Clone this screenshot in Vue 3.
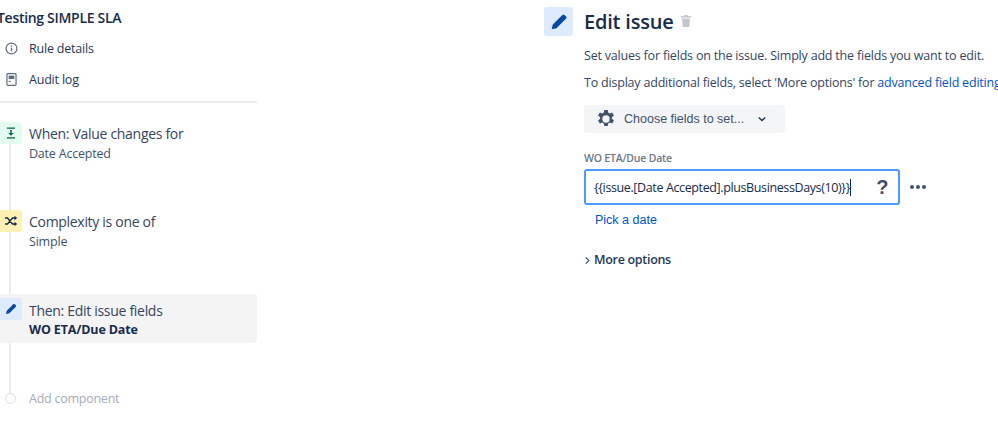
<script setup>
const steps = [
  { title: 'When: Value changes for', sub: 'Date Accepted', kind: 'when' },
  { title: 'Complexity is one of', sub: 'Simple', kind: 'cond' },
  { title: 'Then: Edit issue fields', sub: 'WO ETA/Due Date', kind: 'then' },
]
const expression = '{' + '{issue.[Date Accepted].plusBusinessDays(10)}' + '}'
</script>

<template>
  <div class="page">
    <aside class="side">
      <h2 class="rule-title">Testing SIMPLE SLA</h2>
      <div class="nav-row">
        <svg class="nav-icon" viewBox="0 0 12 12" width="13" height="13">
          <circle cx="6" cy="6" r="5" fill="none" stroke="#5e6c84" stroke-width="1.1" />
          <rect x="5.4" y="5.2" width="1.2" height="3.4" fill="#5e6c84" />
          <rect x="5.4" y="3.1" width="1.2" height="1.2" fill="#5e6c84" />
        </svg>
        <span>Rule details</span>
      </div>
      <div class="nav-row">
        <svg class="nav-icon" viewBox="0 0 12 12" width="13" height="13">
          <rect x="1.8" y=".6" width="8.400" height="10.800" rx=".8" fill="none" stroke="#5e6c84" stroke-width="1.1" />
          <rect x="3.4" y="2.400" width="5.200" height="3.200" fill="#5e6c84" />
          <rect x="3.4" y="7.200" width="2" height="1" fill="#5e6c84" />
        </svg>
        <span>Audit log</span>
      </div>
      <hr class="divider" />
      <div class="flow">
        <div class="rail"></div>
        <div v-for="s in steps" :key="s.kind" class="step" :class="s.kind">
          <div class="badge">
            <svg v-if="s.kind === 'when'" viewBox="0 0 14 14" width="14" height="14">
              <path d="M3 1.500h8v1.300H3zM3 11.200h8v1.300H3zM6.300 4h1.400v3h2L7 9.800 4.300 7h2z" fill="#006644" />
            </svg>
            <svg v-else-if="s.kind === 'cond'" viewBox="0 0 14 14" width="14" height="14">
              <path d="M1 4h2.500l5 6H11M1 10h2.500l5-6H11" fill="none" stroke="#172b4d" stroke-width="1.400" />
              <path d="M10.500 1.800 13.200 4l-2.700 2.200zM10.500 7.800 13.200 10l-2.700 2.200z" fill="#172b4d" />
            </svg>
            <svg v-else viewBox="0 0 14 14" width="14" height="14">
              <path d="M9.300 2.200a1 1 0 0 1 1.400 0l1.100 1.100a1 1 0 0 1 0 1.400L5.300 11.200 2 12l.8-3.300z" fill="#0747a6" />
            </svg>
          </div>
          <div class="step-text">
            <div class="step-title">{{ s.title }}</div>
            <div class="step-sub">{{ s.sub }}</div>
          </div>
        </div>
        <div class="add">
          <span class="add-dot"></span>
          <span>Add component</span>
        </div>
      </div>
    </aside>

    <main class="main">
      <div class="head">
        <div class="head-badge">
          <svg viewBox="0 0 20 20" width="20" height="20">
            <path d="M13.400 2.900a1.400 1.400 0 0 1 2 0l1.700 1.700a1.400 1.400 0 0 1 0 2L7.500 16.200 2.700 17.300l1.100-4.800z" fill="#0747a6" />
          </svg>
        </div>
        <h1 class="head-title">Edit issue</h1>
        <svg class="trash" viewBox="0 0 12 14" width="12" height="14">
          <path d="M4.500 1h3l.5 1h3v1.500H1V2h3zM2 4.500h8L9.300 13H2.700z" fill="#c4c6ca" />
        </svg>
      </div>
      <div class="body">
        <p class="para">Set values for fields on the issue. Simply add the fields you want to edit.</p>
        <p class="para second">To display additional fields, select 'More options' for <a class="link">advanced field editing</a></p>
        <button class="choose">
          <svg viewBox="0 0 20 20" width="20" height="20">
            <path fill-rule="evenodd" d="M8.300 1h3.400l.5 2.600 1.500.8 2.500-.9 1.700 3-2 1.700v1.600l2 1.700-1.700 3-2.500-.9-1.500.8-.5 2.600H8.300l-.5-2.600-1.500-.8-2.500.9-1.700-3 2-1.700V8.200l-2-1.700 1.700-3 2.500.9 1.500-.8zM10 6.300a3.700 3.700 0 1 0 0 7.400 3.700 3.700 0 0 0 0-7.400z" fill="#42526e" />
          </svg>
          <span class="choose-text">Choose fields to set...</span>
          <svg viewBox="0 0 10 10" width="10" height="10">
            <path d="M1.800 3.500 5 6.500l3.200-3" fill="none" stroke="#253858" stroke-width="1.600" />
          </svg>
        </button>
        <label class="field-label">WO ETA/Due Date</label>
        <div class="field-row">
          <div class="input">
            <span class="input-text">{{ expression }}</span>
            <span class="caret"></span>
            <span class="q">?</span>
          </div>
          <div class="dots"><i></i><i></i><i></i></div>
        </div>
        <a class="pick">Pick a date</a>
        <div class="more">
          <svg viewBox="0 0 8 10" width="7" height="9">
            <path d="M2 1.500 5.500 5 2 8.500" fill="none" stroke="#253858" stroke-width="1.200" />
          </svg>
          <span>More options</span>
        </div>
      </div>
    </main>
  </div>
</template>

<style>
html, body { margin: 0; background: #fff; overflow: hidden; }
</style>

<style scoped>
.page {
  width: 998px;
  height: 421px;
  display: flex;
  overflow: hidden;
  font-family: "Open Sans", "Noto Sans", "Liberation Sans", sans-serif;
  color: #172b4d;
  background: #fff;
}
.side { width: 257px; flex: none; padding-top: 8px; }
.rule-title {
  margin: 0 0 0 -3px;
  font-size: 14px;
  line-height: 20px;
  font-weight: 600;
  letter-spacing: -0.3px;
  white-space: nowrap;
}
.nav-row {
  display: flex;
  align-items: center;
  height: 31px;
  font-size: 12.500px;
  color: #253858;
  letter-spacing: -0.2px;
}
.rule-title + .nav-row { margin-top: 5px; }
.nav-icon { margin: 0 11px 0 5px; flex: none; }
.divider { margin: 6px 0 0; border: 0; height: 2px; background: #ebecf0; }
.flow { position: relative; padding-top: 15px; }
.rail {
  position: absolute;
  left: 9px;
  top: 40px;
  width: 2px;
  height: 250px;
  background: #ebecf0;
}
.step {
  position: relative;
  box-sizing: border-box;
  display: flex;
  height: 49px;
  align-items: flex-start;
  padding-top: 4px;
  border-radius: 0 3px 3px 0;
}
.step.cond { margin-top: 39px; }
.step.then { margin-top: 39px; background: #f4f4f5; }
.badge {
  width: 22px;
  height: 22px;
  flex: none;
  display: flex;
  align-items: center;
  justify-content: center;
  border-radius: 0 3px 3px 0;
}
.when .badge { background: #e3fcef; }
.cond .badge { background: #fff0b3; }
.then .badge { background: #deebff; }
.step-text { margin: 1px 0 0 7px; }
.cond .step-text { margin-top: 1px; }
.then .step-text { margin-top: 2px; }
.step-title {
  font-size: 14px;
  line-height: 22px;
  color: #344563;
  letter-spacing: -0.3px;
  white-space: nowrap;
}
.step-sub {
  margin-top: 1px;
  font-size: 12.500px;
  line-height: 16px;
  color: #42526e;
  letter-spacing: -0.2px;
  white-space: nowrap;
}
.then .step-sub { margin-top: 0; font-weight: 700; color: #172b4d; letter-spacing: -0.15px; }
.add {
  position: relative;
  display: flex;
  align-items: center;
  margin-top: 43px;
  height: 24px;
  font-size: 12.500px;
  color: #a5adba;
  letter-spacing: -0.25px;
}
.add-dot {
  width: 9px;
  height: 9px;
  margin: 0 13px 0 5px;
  border: 1px solid #dfe1e6;
  border-radius: 50%;
  background: #fff;
}
.main { padding: 7px 0 0 287px; min-width: 0; flex: 1; }
.head { display: flex; align-items: center; height: 29px; }
.head-badge {
  width: 29px;
  height: 29px;
  flex: none;
  display: flex;
  align-items: center;
  justify-content: center;
  background: #deebff;
  border-radius: 3px;
}
.head-title {
  margin: 0 0 0 11px;
  font-size: 20px;
  line-height: 28px;
  font-weight: 600;
  color: #172b4d;
  letter-spacing: -0.2px;
}
.trash { margin: -2px 0 0 6px; }
.body { padding-left: 40px; white-space: nowrap; }
.para {
  margin: 11px 0 0;
  font-size: 12.500px;
  line-height: 18px;
  color: #344563;
  letter-spacing: -0.2px;
}
.para.second { margin-top: 9px; }
.link { color: #0052cc; }
.choose {
  display: flex;
  align-items: center;
  width: 201px;
  height: 28px;
  margin-top: 13px;
  padding: 0 0 0 12px;
  border: 0;
  border-radius: 3px;
  background: #f4f5f7;
  font-family: "Liberation Sans", sans-serif;
  font-size: 12.500px;
  color: #42526e;
}
.choose-text { margin: 0 13px 0 8px; }
.field-label {
  display: block;
  margin-top: 18px;
  font-size: 10.500px;
  line-height: 14px;
  font-weight: 600;
  color: #6b778c;
  letter-spacing: -0.2px;
}
.field-row { display: flex; align-items: center; margin-top: 4px; }
.input {
  box-sizing: border-box;
  display: flex;
  align-items: center;
  width: 316px;
  height: 36px;
  padding-left: 8px;
  border: 2px solid #4c9aff;
  border-radius: 3px;
  font-size: 12.500px;
  color: #172b4d;
  letter-spacing: -0.38px;
}
.caret { width: 1px; height: 17px; background: #172b4d; }
.q {
  margin-left: auto;
  margin-right: 10px;
  font-family: "Liberation Sans", sans-serif;
  font-size: 20px;
  font-weight: 700;
  color: #42526e;
}
.dots { display: flex; gap: 2px; margin-left: 10px; }
.dots i { width: 4px; height: 4px; border-radius: 50%; background: #42526e; }
.pick {
  display: block;
  margin: 6px 0 0 11px;
  font-family: "Liberation Sans", sans-serif;
  font-size: 12.500px;
  line-height: 18px;
  color: #0052cc;
}
.more {
  display: flex;
  align-items: center;
  gap: 3px;
  margin-top: 22px;
  font-size: 12.500px;
  line-height: 18px;
  font-weight: 600;
  color: #253858;
  letter-spacing: -0.3px;
}
</style>
